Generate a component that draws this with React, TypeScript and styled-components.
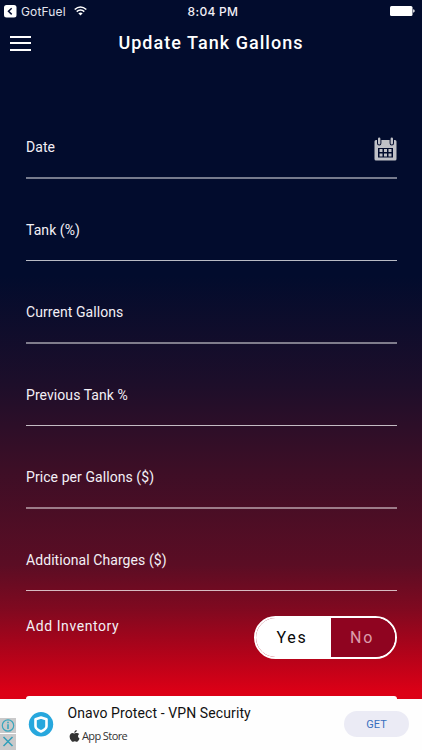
import React from "react";
import styled, { createGlobalStyle } from "styled-components";

const GlobalStyle = createGlobalStyle`
  * { box-sizing: border-box; }
  body { margin: 0; background: #020c2d; }
`;

const Screen = styled.div`
  width: 422px;
  height: 750px;
  overflow: hidden;
  display: flex;
  flex-direction: column;
  color: #f3f0f6;
  font-family: Roboto, "Liberation Sans", sans-serif;
  background: linear-gradient(
    180deg,
    #020c2d 0,
    #020c2d 276px,
    #1d0e2a 384px,
    #3d0e26 470px,
    #5b0d24 565px,
    #7f0920 608px,
    #b0031a 652px,
    #dc0016 692px,
    #e00016 100%
  );
`;

const StatusBar = styled.header`
  height: 22px;
  flex: none;
  display: grid;
  grid-template-columns: 1fr auto 1fr;
  align-items: center;
  padding: 0 7px 0 4px;
  font-family: Inter, sans-serif;
`;

const BackApp = styled.div`
  display: flex;
  align-items: center;
  font-size: 12px;
  letter-spacing: 0.15px;
  color: #e4e5ef;
  svg { display: block; }
  span { margin: 0 8px 0 4px; }
`;

const Clock = styled.div`
  font-size: 12px;
  font-weight: 500;
  letter-spacing: 0.3px;
  padding-left: 7px;
`;

const Battery = styled.svg`
  justify-self: end;
`;

const NavBar = styled.nav`
  height: 42px;
  flex: none;
  display: grid;
  grid-template-columns: 42px 1fr 42px;
  align-items: center;
`;

const MenuButton = styled.button`
  all: unset;
  width: 21px;
  height: 15px;
  margin-left: 10px;
  display: flex;
  flex-direction: column;
  justify-content: space-between;
`;

const MenuLine = styled.i`
  height: 2px;
  background: #fff;
`;

const Title = styled.h1`
  margin: 0;
  text-align: center;
  font-size: 18px;
  font-weight: 500;
  line-height: 22px;
  letter-spacing: 1.04px;
  color: #fff;
`;

const Form = styled.form`
  width: 371px;
  margin: 33px 0 0 26px;
  flex: none;
`;

const Field = styled.label<{ $height: number; $thick?: boolean }>`
  height: ${(p) => p.$height}px;
  display: flex;
  align-items: flex-end;
  justify-content: space-between;
  padding-bottom: 21px;
  border-bottom: ${(p) =>
    p.$thick ? "2px solid rgba(255,255,255,.46)" : "1px solid rgba(255,255,255,.72)"};
  font-size: 14px;
  line-height: 18px;
  letter-spacing: 0.07px;
`;

const CalendarIcon = styled.svg`
  display: block;
  margin-bottom: -6px;
`;

const InventoryRow = styled.div`
  height: 70px;
  padding-top: 25px;
  display: flex;
  justify-content: space-between;
  font-size: 14px;
  letter-spacing: 0.58px;
`;

const InventoryLabel = styled.span`
  line-height: 20px;
`;

const Segments = styled.div`
  width: 143px;
  height: 43px;
  display: grid;
  grid-template-columns: 75px 1fr;
  border: 2px solid #fff;
  border-radius: 22px;
  overflow: hidden;
`;

const Segment = styled.button<{ $active?: boolean }>`
  border: 0;
  padding: 0 ${(p) => (p.$active ? 3 : 2)}px 1px 0;
  font: 16px Roboto, sans-serif;
  letter-spacing: 1.7px;
  background: ${(p) => (p.$active ? "#fff" : "#8f0420")};
  color: ${(p) => (p.$active ? "#080808" : "#dc9dab")};
`;

const SubmitButton = styled.div`
  width: 371px;
  height: 3px;
  margin: 35px 0 0 26px;
  flex: none;
  background: #fff;
  border-radius: 3px 3px 0 0;
`;

const AdBanner = styled.aside`
  flex: 1;
  display: flex;
  background: #fefefe;
  color: #111;
`;

const AdChoices = styled.div`
  width: 16px;
  margin-top: 19px;
  display: flex;
  flex-direction: column;
  gap: 1px;
  svg { display: block; background: #c9c9ca; }
`;

const AdLogo = styled.svg`
  display: block;
  margin: 13px 0 0 12px;
`;

const AdCopy = styled.div`
  flex: 1;
  margin: 4px 0 0 13.5px;
`;

const AdTitle = styled.div`
  font-size: 14px;
  line-height: 20px;
  letter-spacing: 0.1px;
  white-space: nowrap;
`;

const Store = styled.div`
  display: flex;
  align-items: center;
  gap: 2px;
  margin: 5px 0 0 1.5px;
  color: #333;
  font: 11px/16px "Open Sans", sans-serif;
  letter-spacing: -0.6px;
`;

const GetButton = styled.button`
  width: 65px;
  height: 26px;
  margin: 12px 13px 0 0;
  padding: 0;
  border: 0;
  border-radius: 13px;
  background: #ebebf5;
  color: #3970bf;
  font: 11px Roboto, sans-serif;
`;

const fields = [
  { label: "Date", height: 82, thick: true, calendar: true },
  { label: "Tank (%)", height: 82 },
  { label: "Current Gallons", height: 83, thick: true },
  { label: "Previous Tank %", height: 82 },
  { label: "Price per Gallons ($)", height: 83, thick: true },
  { label: "Additional Charges ($)", height: 82 },
];

function Calendar() {
  return (
    <CalendarIcon width="23" height="25" viewBox="0 0 23 25">
      <path
        fill="#c0c1c7"
        fillRule="evenodd"
        d="M2 3h1v3.200a2.200 2.200 0 0 0 4.400 0V3h8.200v3.200a2.200 2.200 0 0 0 4.400 0V3H21q1.500 0 1.500 1.500V22q0 1.500-1.500 1.500H2Q.5 23.500.5 22V4.500Q.5 3 2 3ZM4 11v9.500h15V11Z"
      />
      <path
        fill="#c0c1c7"
        d="M4 1.700a1.200 1.200 0 0 1 2.400 0v4.500a1.200 1.200 0 0 1-2.400 0ZM16.600 1.700a1.200 1.200 0 0 1 2.400 0v4.500a1.200 1.200 0 0 1-2.400 0ZM5.500 12h3v3h-3Zm4.500 0h3v3h-3Zm4.500 0h3v3h-3ZM5.500 16.500h3v3h-3Zm4.500 0h3v3h-3Zm4.500 0h3v3h-3Z"
      />
    </CalendarIcon>
  );
}

export default function App() {
  return (
    <>
      <GlobalStyle />
      <Screen>
        <StatusBar>
          <BackApp>
            <svg width="13" height="13" viewBox="0 0 13 13">
              <rect width="12.500" height="12.500" rx="2.500" fill="#fff" />
              <path d="M7.700 3.200 4.500 6.300l3.200 3.100" fill="none" stroke="#071033" strokeWidth="1.500" />
            </svg>
            <span>GotFuel</span>
            <svg width="13" height="10" viewBox="0 0 13 10" fill="none" stroke="#fff" strokeWidth="1.600">
              <path d="M.7 3.500Q6.500-1.500 12.300 3.500M2.700 5.700Q6.500 2.300 10.300 5.700" />
              <path d="M4.300 7.300Q6.500 5.700 8.700 7.300L6.500 9.600Z" fill="#fff" stroke="none" />
            </svg>
          </BackApp>
          <Clock>8:04 PM</Clock>
          <Battery width="25" height="10" viewBox="0 0 25 10">
            <rect width="22.500" height="10" rx="1.500" fill="#fff" />
            <path d="M23.200 3.300q1.500.3 1.500 1.700t-1.500 1.700Z" fill="#fff" />
          </Battery>
        </StatusBar>
        <NavBar>
          <MenuButton aria-label="Menu">
            <MenuLine />
            <MenuLine />
            <MenuLine />
          </MenuButton>
          <Title>Update Tank Gallons</Title>
        </NavBar>
        <Form>
          {fields.map((f) => (
            <Field key={f.label} $height={f.height} $thick={f.thick}>
              {f.label}
              {f.calendar && <Calendar />}
            </Field>
          ))}
          <InventoryRow>
            <InventoryLabel>Add Inventory</InventoryLabel>
            <Segments>
              <Segment type="button" $active>Yes</Segment>
              <Segment type="button">No</Segment>
            </Segments>
          </InventoryRow>
        </Form>
        <SubmitButton />
        <AdBanner>
          <AdChoices>
            <svg width="16" height="15" viewBox="0 0 16 15" fill="none" stroke="#3ba6bd">
              <circle cx="8" cy="7.500" r="5.700" strokeWidth="1.200" />
              <path d="M8 6.300v4.700M8 3.700v1.500" strokeWidth="1.600" />
            </svg>
            <svg width="16" height="16" viewBox="0 0 16 16" fill="none" stroke="#319fb9" strokeWidth="1.500">
              <path d="m3.500 3 9 9m0-9-9 9" />
            </svg>
          </AdChoices>
          <AdLogo width="26" height="26" viewBox="0 0 26 26">
            <circle cx="13" cy="12.300" r="12.200" fill="#27a7dd" />
            <path
              d="M13 5.500 18.500 7.300v7q0 2.700-5.500 5.200-5.500-2.500-5.500-5.200v-7Z"
              fill="none"
              stroke="#fff"
              strokeWidth="2.600"
              strokeLinejoin="round"
            />
          </AdLogo>
          <AdCopy>
            <AdTitle>Onavo Protect - VPN Security</AdTitle>
            <Store>
              <svg width="11" height="12" viewBox="0 0 11 12" fill="#333">
                <path d="M7.700 0q.1 1.300-.7 2.100-.8.8-1.700.8Q5.200 1.800 6 1 6.700.2 7.700 0ZM10.200 4.100Q8.900 4.900 9 6.300q.1 1.500 1.500 2.100-.4 1.300-1.200 2.400-.7 1-1.600.9-.5 0-1-.3-.9-.3-1.800.1-1.200.5-2 0Q.6 9.500.6 6.700q0-2 1.100-3 1.200-1 2.500-.5l1.200.4 1.400-.5q2.100-.6 3.400 1Z" />
              </svg>
              App Store
            </Store>
          </AdCopy>
          <GetButton>GET</GetButton>
        </AdBanner>
      </Screen>
    </>
  );
}
